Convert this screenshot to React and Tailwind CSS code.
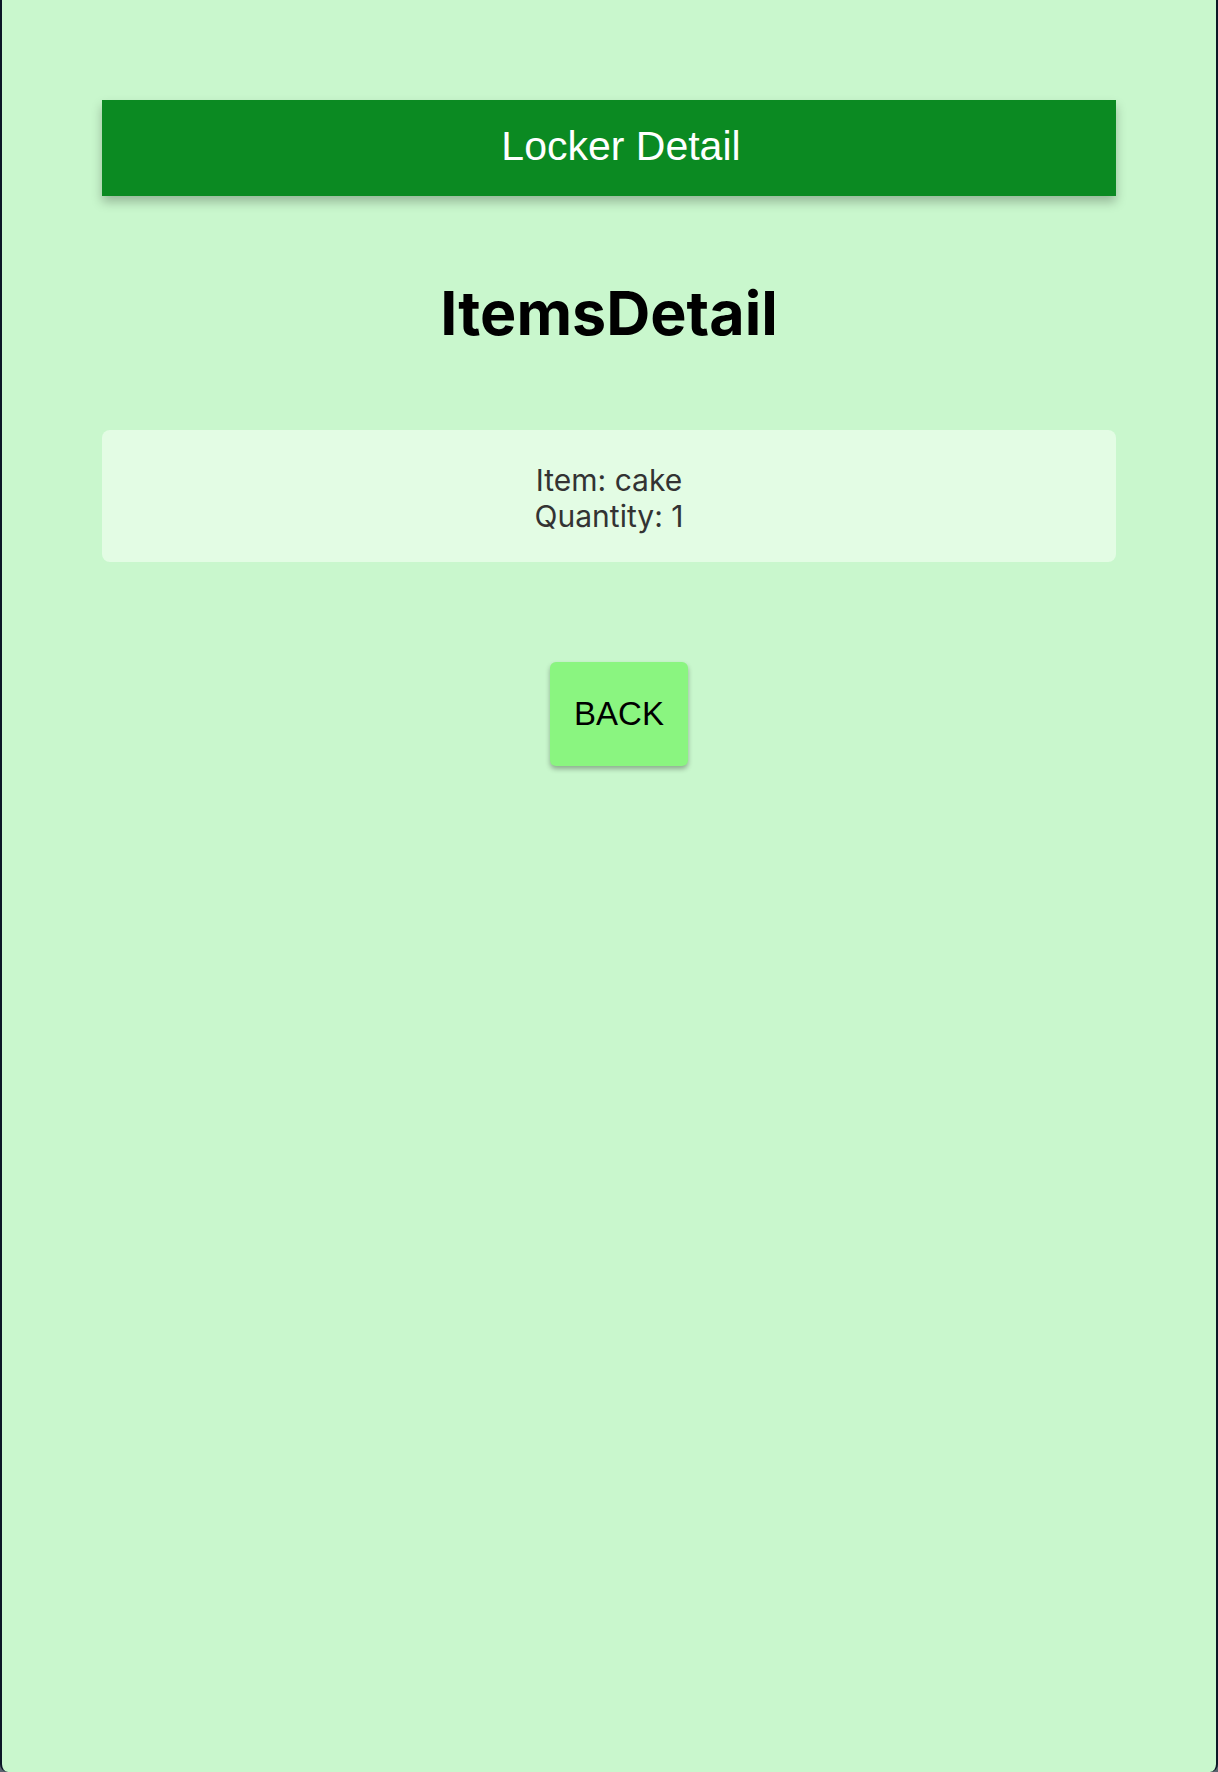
export default function App() {
  return (
    <div className="w-[1218px] h-[1772px] bg-[#5b6470]">
      <div className="h-full bg-[#c9f7cd] border-x-2 border-[#0b1626] rounded-b-[8px] flex flex-col">
        <div className="mx-[100px] mt-[100px] h-[96px] bg-[#0b8a22] shadow-[0_6px_10px_rgba(0,0,0,0.25)] flex items-center justify-center pl-[24px] pb-[3px]">
          <span className="text-white text-[41px] leading-none" style={{ fontFamily: '"Liberation Sans", Arial, sans-serif' }}>
            Locker Detail
          </span>
        </div>
        <h1
          className="mt-[87px] text-center text-[61px] leading-none font-bold text-black"
          style={{ fontFamily: 'Inter, "Liberation Sans", sans-serif' }}
        >
          ItemsDetail
        </h1>
        <div
          className="mx-[100px] mt-[86px] bg-[#e3fce4] rounded-[8px] pt-[32px] pb-[28px] text-center text-[30px] leading-[36px] text-[#333333]"
          style={{ fontFamily: 'Inter, "Liberation Sans", sans-serif' }}
        >
          <div>Item: cake</div>
          <div>Quantity: 1</div>
        </div>
        <div className="mt-[100px] flex justify-center pl-[20px]">
          <button
            className="w-[138px] h-[104px] bg-[#8af580] rounded-[6px] shadow-[0_3px_5px_rgba(0,0,0,0.3)] flex items-center justify-center pb-[2px] text-[33px] leading-none text-black"
            style={{ fontFamily: '"Liberation Sans", Arial, sans-serif' }}
          >
            BACK
          </button>
        </div>
      </div>
    </div>
  );
}
